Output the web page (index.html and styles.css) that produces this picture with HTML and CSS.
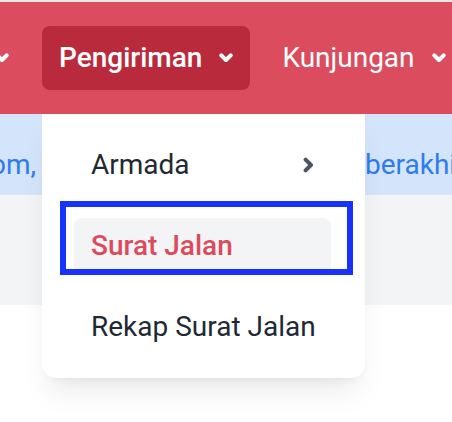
FILE: index.html
```html
<!DOCTYPE html>
<html lang="id">
<head>
<meta charset="utf-8">
<title>Pengiriman</title>
<link rel="stylesheet" href="styles.css">
</head>
<body>
<div class="page">
  <div class="topline"></div>
  <header class="navbar">
    <div class="nav-clip">
      <div class="nav-item">Master
        <svg class="chev-down" width="14" height="10" viewBox="0 0 14 10"><path d="M2.3 2.3 L7 7 L11.7 2.3" /></svg>
      </div>
    </div>
    <div class="nav-item active">Pengiriman
      <svg class="chev-down" width="14" height="10" viewBox="0 0 14 10"><path d="M2.3 2.3 L7 7 L11.7 2.3" /></svg>
    </div>
    <div class="nav-item">Kunjungan
      <svg class="chev-down" width="14" height="10" viewBox="0 0 14 10"><path d="M2.3 2.3 L7 7 L11.7 2.3" /></svg>
    </div>
  </header>
  <div class="notice">
    <span class="notice-start"><span>Selamat datang di Sistem Ekspedisi Kustom,</span></span>
    <span class="notice-end">berakhir pada akhir bulan ini.</span>
  </div>
  <div class="band"></div>

  <div class="dropdown">
    <div class="menu-item">Armada
      <svg class="chev-right" width="11" height="16" viewBox="0 0 11 16"><path d="M2.6 2.6 L8 8 L2.6 13.4" /></svg>
    </div>
    <div class="menu-item active">Surat Jalan</div>
    <div class="menu-item">Rekap Surat Jalan</div>
    <div class="annotation"></div>
  </div>
</div>
</body>
</html>
```

FILE: styles.css
```css
* { box-sizing: border-box; }

html, body {
  margin: 0;
  padding: 0;
  background: #ffffff;
}

body {
  font-family: Roboto, "Noto Sans", "Liberation Sans", sans-serif;
}

.page {
  position: relative;
  width: 452px;
  height: 422px;
  overflow: hidden;
  background: #ffffff;
}

.topline {
  height: 2px;
  background: #ece6e7;
}

.navbar {
  height: 112px;
  background: #da4c5e;
  display: flex;
  align-items: center;
  gap: 15px;
  overflow: hidden;
}

.nav-clip {
  flex: none;
  width: 27px;
  display: flex;
  justify-content: flex-end;
  overflow: hidden;
}

.nav-item {
  flex: none;
  height: 64px;
  padding: 0 18px 0 17px;
  display: flex;
  align-items: center;
  gap: 17px;
  border-radius: 8px;
  color: #ffffff;
  font-size: 28px;
  line-height: 32px;
  white-space: nowrap;
}

.nav-item.active {
  background: #b92b3c;
  font-weight: 500;
  padding-right: 17px;
}

.chev-down {
  flex: none;
  display: block;
}

.chev-down path {
  fill: none;
  stroke: #ffffff;
  stroke-width: 4;
  stroke-linecap: round;
  stroke-linejoin: round;
}

.notice {
  height: 81px;
  padding-top: 35px;
  background: #d4e5fb;
  color: #2f7ce9;
  font-size: 28px;
  font-weight: 400;
  line-height: 32px;
  display: flex;
  gap: 329px;
  white-space: nowrap;
  overflow: hidden;
}

.notice-start {
  flex: none;
  width: 36px;
  display: flex;
  justify-content: flex-end;
  overflow: hidden;
}

.notice-start span {
  flex: none;
}

.notice-end {
  flex: none;
}

.band {
  height: 110px;
  background: #f3f4f6;
}

.dropdown {
  position: absolute;
  left: 42px;
  top: 114px;
  width: 323px;
  padding: 23px 34px 23px 32px;
  background: #ffffff;
  border-radius: 0 0 14px 14px;
  box-shadow: 0 20px 30px -6px rgba(0, 0, 0, 0.08), 0 8px 12px -8px rgba(0, 0, 0, 0.08);
  display: flex;
  flex-direction: column;
  gap: 25px;
}

.menu-item {
  height: 56px;
  padding: 0 17px;
  display: flex;
  align-items: center;
  justify-content: space-between;
  border-radius: 8px;
  font-size: 28px;
  line-height: 32px;
  color: #1f2933;
  white-space: nowrap;
}

.menu-item.active {
  background: #f3f4f6;
  color: #dc4a5d;
  font-weight: 500;
}

.chev-right {
  flex: none;
  display: block;
}

.chev-right path {
  fill: none;
  stroke: #4b5563;
  stroke-width: 4;
  stroke-linecap: round;
  stroke-linejoin: round;
}

.annotation {
  position: absolute;
  left: 18px;
  top: 87px;
  width: 293px;
  height: 74px;
  border: 6px solid #1733fb;
}
```
